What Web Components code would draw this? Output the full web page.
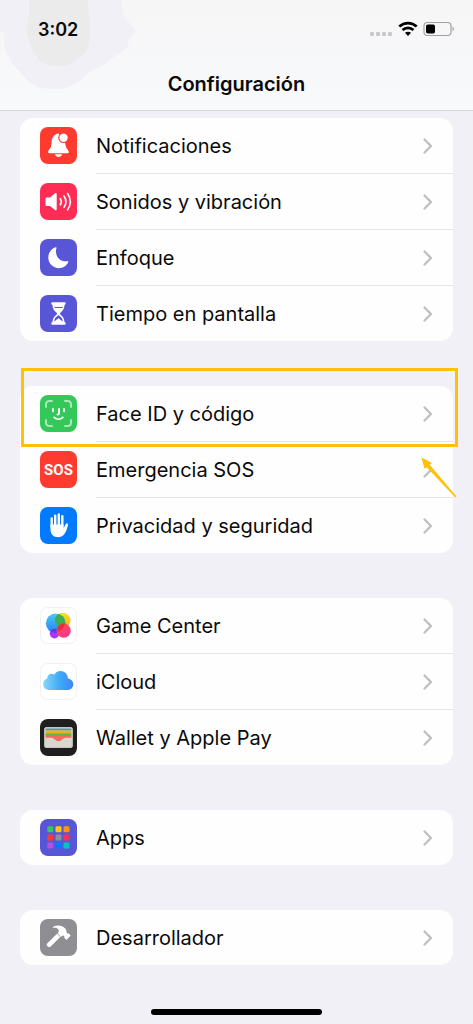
<!DOCTYPE html>
<html lang="es">
<head>
<meta charset="utf-8">
<meta name="viewport" content="width=device-width, initial-scale=1">
<title>Configuración</title>
<style>
    body {
        margin: 0;
        background: #f1f0f6;
        color: #0a0a0a;
        font-family: Inter, "Liberation Sans", sans-serif;
    }
</style>
</head>
<body>
<settings-screen>
    <nav-header slot="header" time="3:02">Configuración</nav-header>

    <settings-group>
        <settings-row icon="bell" color="#ff3b30">Notificaciones</settings-row>
        <settings-row icon="speaker" color="#ff2d55">Sonidos y vibración</settings-row>
        <settings-row icon="moon" color="#5856d6">Enfoque</settings-row>
        <settings-row icon="hourglass" color="#5856d6">Tiempo en pantalla</settings-row>
    </settings-group>

    <settings-group>
        <settings-row icon="face" color="#34c759">Face ID y código</settings-row>
        <settings-row icon="sos" color="#ff3b30">Emergencia SOS</settings-row>
        <settings-row icon="hand" color="#007aff">Privacidad y seguridad</settings-row>
        <row-highlight slot="overlay"></row-highlight>
    </settings-group>

    <settings-group>
        <settings-row icon="game" color="#ffffff">Game Center</settings-row>
        <settings-row icon="cloud" color="#ffffff">iCloud</settings-row>
        <settings-row icon="wallet" color="#1f1f20">Wallet y Apple Pay</settings-row>
    </settings-group>

    <settings-group>
        <settings-row icon="apps" color="#5856d6">Apps</settings-row>
    </settings-group>

    <settings-group>
        <settings-row icon="hammer" color="#8e8e93">Desarrollador</settings-row>
    </settings-group>
</settings-screen>

<script>
'use strict';

// every icon is drawn on a 37x37 tile
const ICONS = {
    bell: `
        <path fill="#fff" d="M18.5 6.5c-4.4.6-6.7 4-6.9 8.3-.1 3.6-.5 5.7-1.900 7.300-1 1.200-1.700 1.800-1.700 2.900 0 .8.5 1.200 1.300 1.200h18.200c.8 0 1.300-.4 1.300-1.200 0-1.100-.8-1.700-1.700-2.900-1-1.300-1.500-3-1.700-5.300z"/>
        <path fill="#fff" d="M15 27.300h7c-.4 1.700-1.700 2.800-3.500 2.800s-3.100-1.100-3.500-2.800z"/>
        <circle cx="23.500" cy="10.700" r="5.300" fill="#ff3b30"/>
        <circle cx="23.500" cy="10.700" r="4.200" fill="#fff"/>`,
    speaker: `
        <path fill="#fff" d="M5.500 16c0-1 .5-1.500 1.500-1.500h3l5-4.200c.9-.7 1.700-.3 1.700.8v15.200c0 1.100-.8 1.500-1.700.8l-5-4.200H7c-1 0-1.500-.5-1.500-1.500z"/>
        <path fill="none" stroke="#fff" stroke-width="1.600" stroke-linecap="round" d="M20.300 15.600c1.300 2 1.300 4.200 0 6.200M24 13c2.400 3.600 2.400 7.800 0 11.400M27.600 10.500c3.500 5.200 3.500 11.200 0 16.400"/>`,
    moon: `
        <path fill="#fff" d="M15.700 8.300c.6-.3 1 .1.800.7-2.400 7.300 3.100 14.500 11 13.200.7-.1 1.100.3.800.9C26.600 27 23 29.200 19 29.200c-6 0-10.700-4.700-10.700-10.600 0-4.600 3-8.800 7.400-10.300z"/>`,
    hourglass: `
        <path fill="#fff" fill-rule="evenodd" d="M12.600 7.300h11.800c.8 0 1.300.5 1.300 1.300 0 .7-.5 1.200-1.200 1.300-.1 3.900-1.500 5.600-4.400 8.100v1.200c2.900 2.300 4.300 4.100 4.400 7.900.7.100 1.200.6 1.200 1.300 0 .8-.5 1.300-1.300 1.300H12.600c-.8 0-1.300-.5-1.300-1.300 0-.7.5-1.200 1.200-1.300.1-3.800 1.500-5.600 4.400-7.900V18c-2.900-2.500-4.300-4.200-4.400-8.100-.7-.1-1.200-.6-1.200-1.300 0-.8.5-1.300 1.300-1.300zM14.700 13h7.600c.3-.9.500-1.900.5-3.100h-8.600c0 1.200.2 2.200.5 3.100zM14.200 26.600l4.300-3.300 4.300 3.300c-.1-3-1.500-4.300-4-6.300h-.6c-2.500 2-3.900 3.300-4 6.300z"/>
        <path fill="#fff" d="M13.500 9h10l-1 3h-8z"/>`,
    face: `
        <path fill="none" stroke="#a9e8b8" stroke-width="2" stroke-linecap="round" d="M6 12V9.500C6 7.500 7.500 6 9.500 6H12M25 6h2.500c2 0 3.500 1.500 3.500 3.500V12M31 25v2.500c0 2-1.500 3.500-3.500 3.500H25M12 31H9.500C7.500 31 6 29.500 6 27.500V25"/>
        <path fill="none" stroke="#fff" stroke-width="1.900" stroke-linecap="round" d="M13 14v2.200M24 14v2.200M19 14v4.300c0 .9-.4 1.300-1.500 1.300M14.200 22.400c2.500 2.300 6.100 2.300 8.600 0"/>`,
    hand: `
        <path fill="none" stroke="#fff" stroke-width="2.400" stroke-linecap="round" d="M11.700 11.500V20M15.200 8.600V19M18.800 7.400V19M22.300 9.200V20M26.800 17.600l-3 6"/>
        <path fill="#fff" d="M10.500 17.500h13v3.800c.6 0 1.100-.8 1.700-2.100l2.700-.8c-1 4-2.300 7.300-4.100 9.400-1.400 1.600-3.200 2.400-5.500 2.400-5 0-7.800-3-7.800-8.200z"/>`,
    game: `
        <defs>
            <linearGradient id="blue" x2="0" y2="1"><stop stop-color="#4cc9f8"/><stop offset="1" stop-color="#2382f7"/></linearGradient>
            <linearGradient id="yellow" x2="0" y2="1"><stop stop-color="#fbe321"/><stop offset="1" stop-color="#fbac1b"/></linearGradient>
            <linearGradient id="pink" x2="1" y2="1"><stop stop-color="#fb5058"/><stop offset="1" stop-color="#fb2f92"/></linearGradient>
            <clipPath id="ball"><circle cx="15.700" cy="16.300" r="9.800"/></clipPath>
        </defs>
        <circle cx="14.500" cy="26.600" r="4.800" fill="#ad35f3"/>
        <circle cx="22.700" cy="13.500" r="7.800" fill="url(#yellow)"/>
        <circle cx="15.700" cy="16.300" r="9.800" fill="url(#blue)"/>
        <g clip-path="url(#ball)">
            <circle cx="22.700" cy="13.500" r="7.800" fill="#3ead50"/>
            <circle cx="14.500" cy="26.600" r="4.800" fill="#6538e0"/>
        </g>
        <circle cx="23.700" cy="23.700" r="7.100" fill="url(#pink)"/>
        <path fill="#e8252f" d="M17 21.300c1.500-3.100 4.500-5 8-4.700-.7 3.500-3 6.700-6.500 8.400z" opacity=".8"/>`,
    cloud: `
        <defs>
            <linearGradient id="sky"><stop stop-color="#85d7f9"/><stop offset=".55" stop-color="#3fa9f7"/><stop offset="1" stop-color="#3d86f5"/></linearGradient>
        </defs>
        <path fill="url(#sky)" d="M9.500 27C5.800 27 3.200 24.500 3.200 21.200c0-2.900 1.700-5 4-5.700.1-2.800 2-4.700 4.300-4.700 1 0 1.900.3 2.700.9C15.500 9.400 17.600 8 20.300 8c4.300 0 7.400 3.200 7.600 7.400 3.200.6 5.400 2.900 5.400 5.800 0 3.400-2.500 5.800-5.900 5.800z"/>`,
    wallet: `
        <rect x="4.300" y="8" width="28.400" height="21" rx="2.500" fill="#dad8ce"/>
        <path fill="#4595bd" d="M5.500 11.600V11c0-1 .6-1.600 1.600-1.600h22.800c1 0 1.600.6 1.600 1.600v.6z"/>
        <path fill="#f2af17" d="M5.500 11.600h26v2.700h-26z"/>
        <path fill="#5fb54a" d="M5.500 14.300h26V17h-26z"/>
        <path fill="#f26b5e" d="M5.500 16.700h26v2h-5c-2 0-3 .5-4.100 1.600-1.100 1.200-2.300 1.900-3.900 1.900s-2.800-.7-3.900-1.900c-1.100-1.100-2.100-1.600-4.100-1.600h-5z"/>
        <rect x="4.800" y="8.500" width="27.400" height="20" rx="2" fill="none" stroke="#c6c4bc"/>`,
    apps: `
        <g>
            <rect x="7.300" y="7.300" width="6" height="6" rx="1.300" fill="#34c759"/>
            <rect x="15.500" y="7.300" width="6" height="6" rx="1.300" fill="#ffc800"/>
            <rect x="23.500" y="7.300" width="6" height="6" rx="1.300" fill="#ff9500"/>
            <rect x="7.300" y="15.500" width="6" height="6" rx="1.300" fill="#ff3b30"/>
            <rect x="15.500" y="15.500" width="6" height="6" rx="1.300" fill="#8e8e93"/>
            <rect x="23.500" y="15.500" width="6" height="6" rx="1.300" fill="#ff2d55"/>
            <rect x="7.300" y="23.500" width="6" height="6" rx="1.300" fill="#af52de"/>
            <rect x="15.500" y="23.500" width="6" height="6" rx="1.300" fill="#007aff"/>
            <rect x="23.500" y="23.500" width="6" height="6" rx="1.300" fill="#00c7be"/>
        </g>`,
    hammer: `
        <path fill="#fff" d="M17 14.700l3.300 3.400L10.700 27.500c-.9.900-2 .9-2.800.1l-.6-.6c-.8-.8-.8-1.900.1-2.800z"/>
        <path fill="#fff" d="M13.200 7.800c4.400-2.200 9.200-1.500 12 1.800 1.100 1.300 1.500 2.600 1.300 4l.8.900 1.100-.3 1.900 1.900c.3.300.3.700 0 1l-3.400 3.300c-.3.300-.7.300-1 0l-1.700-1.800.2-1.100-1-.9c-1.200.4-1.700.7-2.400 1.400l-3.400-3.500c1.100-1.200 1.500-2.800.8-4-.9-1.500-2.800-2-5.200-1.700-.6.100-.6-.7 0-1z"/>`
};

class NavHeader extends HTMLElement {
    constructor() {
        super();
        this.attachShadow({ mode: "open" });
    }

    getTemplate() {
        const template = document.createElement("template");
        template.innerHTML = `
        <header>
            <svg class="shade" viewBox="0 0 140 92" width="140" height="92" aria-hidden="true">
                <path fill="#f1f0f6" d="M0 0h121l3 17 12 14-7 9-2 8-14 9-10 8-14 7-9 9-10 5-8 3-12 0H53l-12-1-11-5-10-11-8-9-6-12-2-8V34l-4-4z"/>
                <path fill="#ebebeb" d="M29 0h59l1 18 1 14-1 12-4 9-8 7-11 6H50l-9-4-7-9-4-10-3-8V28l2-12z"/>
            </svg>
            <div class="status">
                <time>${this.getAttribute("time")}</time>
                <svg width="86" height="16" viewBox="0 0 86 16" role="img" aria-label="Wi-Fi, batería">
                    <g fill="#c8c8ca">
                        <rect x="1" y="11" width="4" height="4" rx="1.300"/>
                        <rect x="7" y="11" width="4" height="4" rx="1.300"/>
                        <rect x="13" y="11" width="4" height="4" rx="1.300"/>
                        <rect x="19" y="11" width="4" height="4" rx="1.300"/>
                    </g>
                    <g fill="none" stroke="#000" stroke-width="2.700">
                        <path d="M30.300 5.600c5-4.700 12.400-4.700 17.400 0"/>
                        <path d="M33.500 9.100c3.200-2.900 7.800-2.900 11 0"/>
                    </g>
                    <path d="M36 11.800c1.700-1.400 4.300-1.400 6 0L39 15z"/>
                    <rect x="55" y="1.500" width="27" height="13" rx="3.500" fill="none" stroke="#a2a2a4" stroke-width="1.200"/>
                    <rect x="57" y="3.500" width="9" height="9" rx="1.800"/>
                    <path fill="#a2a2a4" d="M83.500 5.800c1.800.5 1.800 3.900 0 4.400z"/>
                </svg>
            </div>
            <h1><slot></slot></h1>
        </header>
        ${this.getStyles()}
      `;
        return template;
    }

    getStyles() {
        return `
        <style>
        :host {
            display: block;
        }
        header {
            position: relative;
            background: linear-gradient(#f6f6f7, #f8f9fb);
            border-bottom: 1px solid #d9d9dd;
            padding: 16px 18px 12px 38px;
        }
        .shade {
            position: absolute;
            top: 0;
            left: 0;
        }
        .status {
            position: relative;
            display: flex;
            align-items: center;
            justify-content: space-between;
            height: 26px;
        }
        time {
            font-size: 18px;
            font-weight: 600;
        }
        h1 {
            position: relative;
            margin: 28px 20px 0 0;
            font-size: 20px;
            font-weight: 600;
            line-height: 28px;
            text-align: center;
        }
        </style>
      `;
    }

    connectedCallback() {
        this.shadowRoot.appendChild(this.getTemplate().content.cloneNode(true));
    }
}

class SettingsIcon extends HTMLElement {
    constructor() {
        super();
        this.attachShadow({ mode: "open" });
    }

    getTemplate() {
        const name = this.getAttribute("name");
        const template = document.createElement("template");
        template.innerHTML = `
        ${name === "sos"
            ? `<span>SOS</span>`
            : `<svg viewBox="0 0 37 37" width="37" height="37" aria-hidden="true">${ICONS[name]}</svg>`}
        ${this.getStyles()}
      `;
        return template;
    }

    getStyles() {
        const color = this.getAttribute("color");
        return `
        <style>
        :host {
            display: flex;
            align-items: center;
            justify-content: center;
            width: 37px;
            height: 37px;
            border-radius: 8px;
            background: ${color};
            ${color === "#ffffff" ? "box-shadow: inset 0 0 0 1px #f1f1f4;" : ""}
        }
        span {
            color: #fff;
            font: bold 15px Roboto, "Liberation Sans", sans-serif;
        }
        </style>
      `;
    }

    connectedCallback() {
        this.shadowRoot.appendChild(this.getTemplate().content.cloneNode(true));
    }
}

class SettingsRow extends HTMLElement {
    constructor() {
        super();
        this.attachShadow({ mode: "open" });
    }

    getTemplate() {
        const template = document.createElement("template");
        template.innerHTML = `
        <a href="#${this.getAttribute("icon")}">
            <settings-icon name="${this.getAttribute("icon")}" color="${this.getAttribute("color")}"></settings-icon>
            <span class="label"><slot></slot></span>
            <svg width="10" height="16" viewBox="0 0 10 16" aria-hidden="true">
                <path d="M1.500 1.500L8 8l-6.500 6.500" fill="none" stroke="#bdbdc0" stroke-width="2.200" stroke-linecap="round" stroke-linejoin="round"/>
            </svg>
        </a>
        <div class="line"></div>
        ${this.getStyles()}
      `;
        return template;
    }

    getStyles() {
        return `
        <style>
        :host {
            display: block;
        }
        a {
            display: flex;
            align-items: center;
            height: 55px;
            padding: 0 20px;
            color: inherit;
            text-decoration: none;
        }
        .label {
            flex: 1;
            margin-left: 19px;
            font-size: 20px;
            line-height: 28px;
            white-space: nowrap;
        }
        .line {
            height: 1px;
            margin-left: 76px;
            background: #e4e4e8;
        }
        :host(:last-of-type) .line {
            display: none;
        }
        </style>
      `;
    }

    connectedCallback() {
        this.shadowRoot.appendChild(this.getTemplate().content.cloneNode(true));
    }
}

class SettingsGroup extends HTMLElement {
    constructor() {
        super();
        this.attachShadow({ mode: "open" });
    }

    getTemplate() {
        const template = document.createElement("template");
        template.innerHTML = `
        <section><slot></slot></section>
        <slot name="overlay"></slot>
        <style>
        :host {
            display: block;
            position: relative;
        }
        section {
            border-radius: 13px;
            background: #fefefe;
            overflow: hidden;
        }
        </style>
      `;
        return template;
    }

    connectedCallback() {
        this.shadowRoot.appendChild(this.getTemplate().content.cloneNode(true));
    }
}

// yellow frame and arrow laid over the first row of a group
class RowHighlight extends HTMLElement {
    constructor() {
        super();
        this.attachShadow({ mode: "open" });
    }

    connectedCallback() {
        this.shadowRoot.innerHTML = `
        <div class="frame"></div>
        <svg width="38" height="42" viewBox="0 0 38 42" aria-hidden="true">
            <path fill="#ffc107" d="M1.500.5L12 6l-2.300 1.700L36.500 39.500l-1.200 1L6.700 10.300 4.300 11.500z"/>
        </svg>
        <style>
        :host {
            position: absolute;
            top: -18px;
            left: 1px;
            right: -5px;
            pointer-events: none;
        }
        .frame {
            box-sizing: border-box;
            height: 79px;
            border: 3px solid #ffc107;
        }
        svg {
            display: block;
            margin: 10px 0 0 auto;
        }
        </style>
      `;
    }
}

class SettingsScreen extends HTMLElement {
    constructor() {
        super();
        this.attachShadow({ mode: "open" });
    }

    getTemplate() {
        const template = document.createElement("template");
        template.innerHTML = `
        <slot name="header"></slot>
        <main><slot></slot></main>
        <div class="home"></div>
        <style>
        :host {
            display: flex;
            flex-direction: column;
            min-height: 100vh;
        }
        main {
            display: flex;
            flex-direction: column;
            gap: 45px;
            padding: 7px 20px 20px;
        }
        .home {
            width: 36%;
            height: 6px;
            margin: auto auto 9px;
            border-radius: 3px;
            background: #000;
        }
        </style>
      `;
        return template;
    }

    connectedCallback() {
        this.shadowRoot.appendChild(this.getTemplate().content.cloneNode(true));
    }
}

customElements.define("settings-icon", SettingsIcon);
customElements.define("settings-row", SettingsRow);
customElements.define("settings-group", SettingsGroup);
customElements.define("row-highlight", RowHighlight);
customElements.define("nav-header", NavHeader);
customElements.define("settings-screen", SettingsScreen);
</script>
</body>
</html>
